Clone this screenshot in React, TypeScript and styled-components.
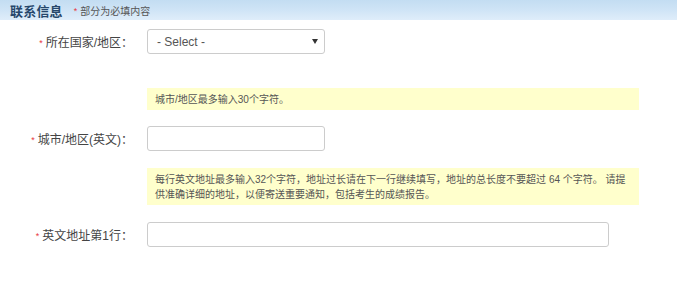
import React from "react";
import styled, { createGlobalStyle } from "styled-components";

const GlobalStyle = createGlobalStyle`
  body {
    margin: 0;
    background: #fff;
    font-family: "Liberation Sans", "Noto Sans CJK SC", sans-serif;
    color: #333;
  }
`;

const Page = styled.div`
  width: 677px;
`;

const Header = styled.div`
  height: 20px;
  display: flex;
  align-items: center;
  padding-left: 10px;
  background: linear-gradient(to bottom, #c3ddf2 0%, #cfe4f6 50%, #dfedfa 100%);
`;

const Title = styled.span`
  font-size: 13px;
  font-weight: bold;
  color: #26476b;
  letter-spacing: 0.2px;
`;

const Note = styled.span`
  margin-left: 11px;
  font-size: 10px;
  color: #555;
`;

const Star = styled.span`
  color: #e8383d;
  font-size: 9px;
  margin-right: 3px;
  position: relative;
  top: -1px;
`;

const Form = styled.div`
  display: flex;
  flex-direction: column;
`;

const Row = styled.div<{ $top: number }>`
  display: flex;
  align-items: center;
  margin-top: ${(p) => p.$top}px;
`;

const Label = styled.label`
  width: 147px;
  box-sizing: border-box;
  padding-right: 14px;
  text-align: right;
  font-size: 12px;
  color: #444;
`;

const Field = styled.div<{ $width: number }>`
  width: ${(p) => p.$width}px;
  height: 25px;
  box-sizing: border-box;
  border: 1px solid #ccc;
  border-radius: 3px;
  background: #fff;
  display: flex;
  align-items: center;
  justify-content: space-between;
  padding: 0 6px 0 9px;
  font-size: 12px;
  color: #555;
`;

const Arrow = styled.span`
  width: 0;
  height: 0;
  border-left: 3px solid transparent;
  border-right: 3px solid transparent;
  border-top: 5px solid #333;
`;

const Hint = styled.div<{ $top: number }>`
  margin-top: ${(p) => p.$top}px;
  margin-left: 147px;
  width: 492px;
  box-sizing: border-box;
  padding: 4px 6px 3px 8px;
  background: #ffffcc;
  font-size: 10px;
  line-height: 15px;
  color: #555;
`;

const App = () => {
  return (
    <>
      <GlobalStyle />
      <Page>
        <Header>
          <Title>联系信息</Title>
          <Note>
            <Star>*</Star>部分为必填内容
          </Note>
        </Header>
        <Form>
          <Row $top={9}>
            <Label>
              <Star>*</Star>所在国家/地区：
            </Label>
            <Field $width={178}>
              - Select -
              <Arrow />
            </Field>
          </Row>
          <Hint $top={34}>城市/地区最多输入30个字符。</Hint>
          <Row $top={16}>
            <Label>
              <Star>*</Star>城市/地区(英文)：
            </Label>
            <Field $width={178} />
          </Row>
          <Hint $top={17}>
            每行英文地址最多输入32个字符，地址过长请在下一行继续填写，地址的总长度不要超过 64 个字符。 请提供准确详细的地址，以便寄送重要通知，包括考生的成绩报告。
          </Hint>
          <Row $top={17}>
            <Label>
              <Star>*</Star>英文地址第1行：
            </Label>
            <Field $width={462} />
          </Row>
        </Form>
      </Page>
    </>
  );
};

export default App;
